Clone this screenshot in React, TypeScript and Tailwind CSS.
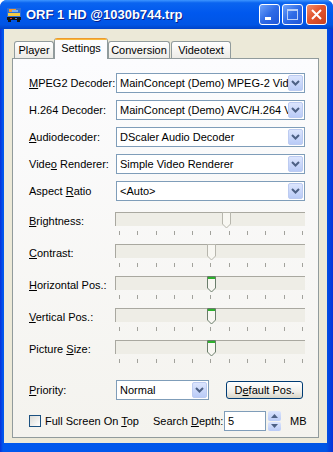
import React from 'react';

// Windows XP style properties dialog

function Chevron() {
  return (
    <svg width="9" height="6" viewBox="0 0 9 6">
      <path d="M1 1 L4.5 4.5 L8 1" fill="none" stroke="#4D6185" strokeWidth="2" />
    </svg>
  );
}

function DropButton() {
  return (
    <div className="mr-px flex h-[16px] w-[15px] shrink-0 items-center justify-center rounded-[2px] border border-[#BCCBF1] bg-[linear-gradient(to_bottom,#DCE5FD,#B9CBF7)]">
      <Chevron />
    </div>
  );
}

function Combo({ value, className }: { value: string; className: string }) {
  return (
    <div className={`flex h-[20px] shrink-0 items-center border border-[#7F9DB9] bg-white ${className}`}>
      <span className="flex-1 overflow-hidden whitespace-nowrap pl-[3px] leading-[18px]">{value}</span>
      <DropButton />
    </div>
  );
}

function Thumb({ enabled, left }: { enabled: boolean; left: number }) {
  return (
    <svg className="absolute top-0" style={{ left }} width="9" height="17" viewBox="0 0 9 17">
      <path
        d="M0.5 0.5 H8.5 V12 L4.5 16 L0.5 12 Z"
        fill="#F8F7F2"
        stroke={enabled ? '#6A7D6A' : '#B7B6AD'}
      />
      {enabled && <rect x="1" y="1" width="7" height="2" fill="#2DB02D" />}
    </svg>
  );
}

function Slider({ pos, enabled }: { pos: number; enabled: boolean }) {
  return (
    <div className="relative h-[32px] w-[190px]">
      <div className="h-[14px] border-l border-t border-[#A9A8A0] bg-[#EEEDE6]" />
      <div className="mt-[5px] flex justify-between pl-[4px] pr-[2px]">
        {Array.from({ length: 11 }).map((_, i) => (
          <div key={i} className="h-[4px] w-px bg-[#A2A29C]" />
        ))}
      </div>
      <Thumb enabled={enabled} left={pos} />
    </div>
  );
}

function ComboRow({ label, value }: { label: React.ReactNode; value: string }) {
  return (
    <div className="flex h-[20px] items-center">
      <span className="w-[87px] shrink-0 whitespace-nowrap">{label}</span>
      <Combo value={value} className="w-[189px]" />
    </div>
  );
}

function SliderRow({ label, pos, enabled }: { label: React.ReactNode; pos: number; enabled: boolean }) {
  return (
    <div className="flex h-[32px]">
      <div className="flex h-[18px] w-[86px] shrink-0 items-center">
        <span className="whitespace-nowrap">{label}</span>
      </div>
      <Slider pos={pos} enabled={enabled} />
    </div>
  );
}

function AppIcon() {
  return (
    <svg width="16" height="16" viewBox="0 0 16 16">
      <rect x="1" y="1" width="14" height="9" fill="#2F6FD6" />
      <rect x="3" y="2" width="7" height="3" fill="#F29A36" />
      <rect x="6" y="3" width="6" height="2" fill="#7FB2F0" />
      <rect x="2" y="6" width="12" height="3" fill="#F3CC45" />
      <rect x="1" y="10" width="14" height="3" fill="#151515" />
      <rect x="4" y="11" width="2" height="1" fill="#E03A2A" />
      <rect x="9" y="11" width="2" height="1" fill="#3A7BE0" />
      <rect x="2" y="13" width="3" height="2" fill="#151515" />
      <rect x="11" y="13" width="3" height="2" fill="#151515" />
    </svg>
  );
}

function TitleButton({ kind }: { kind: 'min' | 'max' | 'close' }) {
  const bg =
    kind === 'close'
      ? 'bg-[linear-gradient(135deg,#F08E6C,#E2552F_45%,#C8401E)]'
      : 'bg-[linear-gradient(135deg,#6FA3FB,#2F6BE6_50%,#1F56D8)]';
  return (
    <div className={`flex h-[21px] w-[21px] items-center justify-center rounded-[3px] border border-white ${bg}`}>
      {kind === 'min' && (
        <svg width="19" height="19" viewBox="0 0 19 19">
          <rect x="5" y="12" width="6" height="3" fill="white" />
        </svg>
      )}
      {kind === 'max' && (
        <svg width="19" height="19" viewBox="0 0 19 19">
          <rect x="4.5" y="4.5" width="10" height="10" fill="none" stroke="#B9CFF7" />
          <rect x="4" y="4" width="11" height="2" fill="#B9CFF7" />
        </svg>
      )}
      {kind === 'close' && (
        <svg width="19" height="19" viewBox="0 0 19 19">
          <path d="M5 5 L14 14 M14 5 L5 14" stroke="white" strokeWidth="2" />
        </svg>
      )}
    </div>
  );
}

export default function App() {
  return (
    <div className="flex h-[452px] w-[333px] flex-col overflow-hidden rounded-t-[7px] bg-[linear-gradient(to_right,#0831D9,#0058EE_3px,#0055E5_326px,#0831D9)] font-['Liberation_Sans',Arial,sans-serif] text-[11px] text-black">
      {/* Title bar */}
      <div className="flex h-[29px] shrink-0 items-center bg-[linear-gradient(to_bottom,#3D95FF_0%,#0A64F0_10%,#0058EE_45%,#0055E5_85%,#0043C8_100%)] pl-[6px] pr-[6px]">
        <AppIcon />
        <span className="ml-[4px] text-[13px] font-bold text-white [text-shadow:1px_1px_#0A1E8A]">
          ORF 1 HD @1030b744.trp
        </span>
        <div className="ml-auto flex items-center">
          <TitleButton kind="min" />
          <div className="ml-[2px]">
            <TitleButton kind="max" />
          </div>
          <div className="ml-[3px]">
            <TitleButton kind="close" />
          </div>
        </div>
      </div>

      {/* Client area */}
      <div className="mb-[9px] ml-[4px] mr-[6px] flex flex-1 flex-col bg-[#ECE9D8] px-[8px] pt-[9px]">
        {/* Tabs */}
        <div className="flex h-[20px] items-end pl-[2px]">
          <div className="flex h-[17px] w-[40px] items-center justify-center rounded-t-[3px] border-x border-t border-[#919B9C] bg-[linear-gradient(to_bottom,#FFFFFF,#ECEBE6)]">
            Player
          </div>
          <div className="relative z-10 -mb-px flex h-[21px] w-[54px] flex-col rounded-t-[3px] border-x border-[#919B9C] bg-[#FCFCFE]">
            <div className="h-[3px] rounded-t-[2px] bg-[linear-gradient(to_bottom,#E68B2C,#FFC73C)]" />
            <div className="flex flex-1 items-center justify-center pb-[3px]">Settings</div>
          </div>
          <div className="flex h-[17px] w-[62px] items-center justify-center rounded-t-[3px] border-x border-t border-[#919B9C] bg-[linear-gradient(to_bottom,#FFFFFF,#ECEBE6)]">
            Conversion
          </div>
          <div className="ml-px flex h-[17px] w-[60px] items-center justify-center rounded-t-[3px] border-x border-t border-[#919B9C] bg-[linear-gradient(to_bottom,#FFFFFF,#ECEBE6)]">
            Videotext
          </div>
        </div>

        {/* Tab panel */}
        <div className="flex h-[380px] flex-col border border-[#919B9C] bg-[linear-gradient(to_bottom,#FCFCFE,#F4F3EE)] pl-[16px] pt-[14px]">
          <div className="flex flex-col gap-[7px]">
            <ComboRow label={<><u>M</u>PEG2 Decoder:</>} value="MainConcept (Demo) MPEG-2 Video Decoder" />
            <ComboRow label="H.264 Decoder:" value="MainConcept (Demo) AVC/H.264 Video Decoder" />
            <ComboRow label={<><u>A</u>udiodecoder:</>} value="DScaler Audio Decoder" />
            <ComboRow label={<>Vide<u>o</u> Renderer:</>} value="Simple Video Renderer" />
            <ComboRow label={<>Aspect <u>R</u>atio</>} value="<Auto>" />
          </div>

          <div className="mt-[11px] flex flex-col">
            <SliderRow label={<><u>B</u>rightness:</>} pos={107} enabled={false} />
            <SliderRow label={<><u>C</u>ontrast:</>} pos={92} enabled={false} />
            <SliderRow label={<><u>H</u>orizontal Pos.:</>} pos={92} enabled />
            <SliderRow label={<><u>V</u>ertical Pos.:</>} pos={92} enabled />
            <SliderRow label={<>Picture <u>S</u>ize:</>} pos={92} enabled />
          </div>

          <div className="mt-[8px] flex h-[20px] items-center">
            <span className="w-[87px] shrink-0">
              <u>P</u>riority:
            </span>
            <Combo value="Normal" className="w-[93px]" />
            <div className="ml-[17px] flex h-[18px] w-[77px] items-center justify-center rounded-[3px] border border-[#003C74] bg-[linear-gradient(to_bottom,#FFFFFF,#F0EFEA_60%,#D8D5C8)]">
              <span>
                D<u>e</u>fault Pos.
              </span>
            </div>
          </div>

          <div className="mt-[11px] flex h-[20px] items-center">
            <div className="h-[12px] w-[12px] shrink-0 border border-[#1C5180] bg-[linear-gradient(135deg,#DCDCD7,#FFFFFF)]" />
            <span className="ml-[4px] w-[108px] shrink-0 whitespace-nowrap">
              Full Screen On <u>T</u>op
            </span>
            <span className="w-[71px] shrink-0 whitespace-nowrap">
              Search <u>D</u>epth:
            </span>
            <div className="flex h-[20px] w-[42px] items-center border border-[#7F9DB9] bg-white pl-[3px]">5</div>
            <div className="ml-[2px] flex h-[20px] w-[13px] flex-col gap-px">
              <div className="flex flex-1 items-center justify-center rounded-[2px] bg-[linear-gradient(to_bottom,#DCE5FD,#B9CBF7)]">
                <svg width="7" height="4" viewBox="0 0 7 4">
                  <path d="M0 4 L3.5 0 L7 4 Z" fill="#4D6185" />
                </svg>
              </div>
              <div className="flex flex-1 items-center justify-center rounded-[2px] bg-[linear-gradient(to_bottom,#DCE5FD,#B9CBF7)]">
                <svg width="7" height="4" viewBox="0 0 7 4">
                  <path d="M0 0 L3.5 4 L7 0 Z" fill="#4D6185" />
                </svg>
              </div>
            </div>
            <span className="ml-[9px]">MB</span>
          </div>
        </div>
      </div>
    </div>
  );
}
